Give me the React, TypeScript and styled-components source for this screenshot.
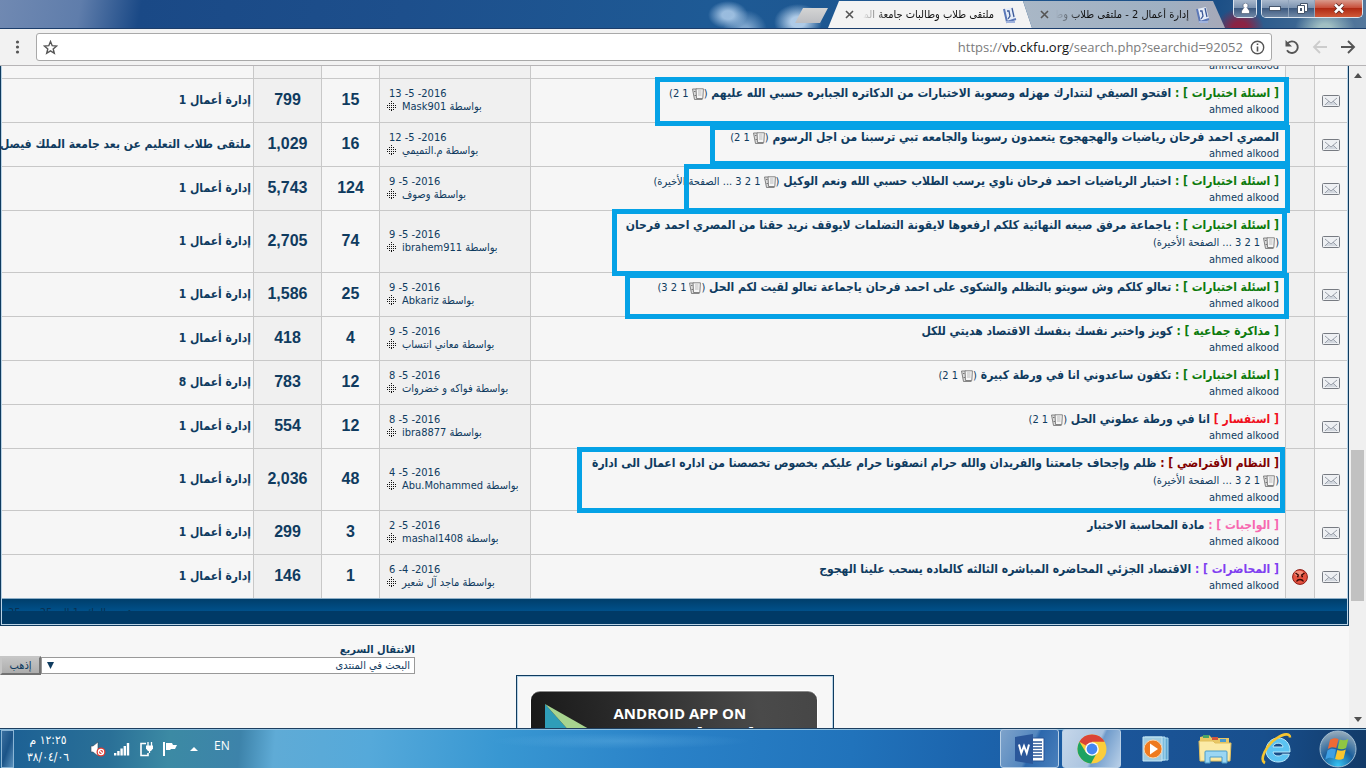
import React from "react";
import styled, { createGlobalStyle } from "styled-components";

const ui = '"DejaVu Sans Condensed", "DejaVu Sans", sans-serif';
const navy = "#0f3b5f";
const line = "#c8c8c8";

const GlobalStyle = createGlobalStyle`
  * { box-sizing: border-box; }
  html, body { margin: 0; height: 100%; overflow: hidden; background: #f7f7f7; }
  a { color: inherit; text-decoration: none; }
  button { font: inherit; color: inherit; padding: 0; border: 0; background: none; }
  svg { display: block; flex: none; }
`;

const Screen = styled.div`
  display: flex;
  flex-direction: column;
  height: 100vh;
  font-family: ${ui};
  font-size: 11px;
  color: ${navy};
`;

/* ---------- browser frame ---------- */

const TitleBar = styled.header`
  display: flex;
  justify-content: flex-end;
  align-items: flex-end;
  flex: none;
  height: 29px;
  padding-right: 3px;
  border-bottom: 1px solid #1b3d6b;
  background:
    radial-gradient(ellipse 20px 14px at 728px 15px, rgba(175, 205, 235, 0.85) 30%, transparent),
    radial-gradient(ellipse 22px 20px at 745px 30px, rgba(150, 185, 220, 0.8) 20%, transparent),
    radial-gradient(ellipse 24px 18px at 798px 22px, rgba(190, 215, 240, 0.9) 30%, transparent),
    radial-gradient(ellipse 24px 20px at 1240px 28px, rgba(150, 30, 60, 0.9) 30%, transparent),
    radial-gradient(ellipse 30px 20px at 1325px 28px, rgba(170, 200, 200, 0.9) 20%, transparent),
    linear-gradient(100deg, #7089b2 0, #5f7dab 80px, #1a4986 140px, #1d4f8c 400px, #1e5a95 700px, #1c4f86 1200px, #55789c 100%);
`;

const NewTab = styled.button`
  width: 33px;
  height: 15px;
  margin-bottom: 5px;
  background: linear-gradient(#d4d4d4, #bcbec2);
  clip-path: polygon(8px 0, 100% 0, calc(100% - 8px) 100%, 0 100%);
`;

const Tab = styled.div<{ $active?: boolean }>`
  display: flex;
  align-items: center;
  justify-content: flex-end;
  gap: ${(p) => (p.$active ? 9 : 7)}px;
  width: ${(p) => (p.$active ? 204 : 202)}px;
  height: 27px;
  padding: 0 15px 0 17px;
  margin-left: ${(p) => (p.$active ? 0 : -9)}px;
  color: #111;
  background: ${(p) => (p.$active ? "#f3f3f3" : "linear-gradient(90deg, #a9b7c6, #9fb0c2 70%, #a7a9b8)")};
  clip-path: ${(p) =>
    p.$active
      ? "polygon(11px 0, calc(100% - 9px) 0, 100% 100%, 0 100%)"
      : "polygon(0 0, calc(100% - 12px) 0, 100% 100%, 9px 100%)"};
`;

const TabTitle = styled.span`
  flex: 1;
  min-width: 0;
  direction: rtl;
  white-space: nowrap;
  overflow: hidden;
  mask-image: linear-gradient(90deg, transparent, #000 24px);
`;

const Controls = styled.div`
  display: flex;
  align-self: flex-start;
  gap: 4px;
  margin-left: 8px;
`;

const ControlGroup = styled.div`
  display: flex;
  border: 1px solid #dbe4ee;
  border-top: 0;
  border-radius: 0 0 5px 5px;
  overflow: hidden;
`;

const Control = styled.button<{ $wide?: boolean; $narrow?: boolean }>`
  display: flex;
  align-items: center;
  justify-content: center;
  width: ${(p) => (p.$wide ? 48 : p.$narrow ? 22 : 26)}px;
  height: 17px;
  border-left: 1px solid #8fa3bb;
  background: ${(p) =>
    p.$wide
      ? "linear-gradient(#d99a8c, #c8503c 45%, #b02a14 50%, #cf5a3a)"
      : "linear-gradient(#a9b9cd, #7c93b0 45%, #3d5a80 50%, #7088a6)"};
  &:first-child { border-left: 0; }
`;

const Toolbar = styled.div`
  display: flex;
  align-items: center;
  flex: none;
  height: 37px;
  padding: 0 10px 0 9px;
  border-bottom: 1px solid #b6b4b6;
  background: #f2f2f2;
`;

const Address = styled.div`
  display: flex;
  align-items: center;
  flex: 1;
  gap: 7px;
  height: 28px;
  margin-left: 10px;
  padding: 0 6px;
  border: 1px solid #a9a9a9;
  border-radius: 3px;
  background: #fff;
`;

const Url = styled.a`
  flex: 1;
  text-align: right;
  font: 13px "Open Sans", sans-serif;
  color: #7b7b7b;
  b { font-weight: 400; color: #111; }
`;

const NavButton = styled.button`
  margin-left: 12px;
  &:first-of-type { margin-left: 0; }
`;

/* ---------- page ---------- */

const Viewport = styled.div`
  display: flex;
  flex: 1;
  min-height: 0;
  overflow: hidden;
  background: #f7f7f7;
`;

const Page = styled.main`
  flex: 1;
  min-width: 0;
  margin-top: -33px;
`;

const Scrollbar = styled.div`
  display: flex;
  flex-direction: column;
  align-items: center;
  justify-content: space-between;
  width: 17px;
  padding: 7px 0 6px;
  background: #f0f0f0;
`;

const Thumb = styled.div`
  width: 13px;
  height: 151px;
  margin-top: 256px;
  background: #c1c1c1;
`;

const Frame = styled.section`
  border: 1px solid ${navy};
  padding: 0 1px 1px;
  background: #b9d3e6;
`;

const Table = styled.table`
  width: 100%;
  table-layout: fixed;
  border-collapse: separate;
  border-spacing: 0;
  direction: rtl;
`;

const Col = styled.col<{ $w?: number }>`
  width: ${(p) => (p.$w ? `${p.$w}px` : "auto")};
`;

const Cell = styled.td<{ $alt?: boolean }>`
  height: 44px;
  padding: 0;
  border-top: 1px solid ${line};
  border-left: 1px solid ${line};
  background: ${(p) => (p.$alt ? "#f0f0f0" : "#f6f6f6")};
  vertical-align: middle;
  &:last-child { border-left: 0; }
  > svg { margin: 0 auto; }
`;

const SubjectCell = styled(Cell)`
  position: relative;
  padding: 5px 6px;
  vertical-align: bottom;
  white-space: nowrap;
`;

const Count = styled(Cell)`
  padding-bottom: 2px;
  text-align: center;
  font: bold 16px "Liberation Sans", Arial, sans-serif;
`;

const ForumCell = styled(Cell)`
  padding: 0 2px 2px;
  font: bold 12px/18px ${ui};
  text-align: right;
  white-space: nowrap;
`;

const LastCell = styled(Cell)`
  padding: 0 7px 2px;
  line-height: 13px;
`;

const DateLine = styled.div`
  direction: ltr;
  padding-left: 2px;
`;

const ByLine = styled.div`
  display: flex;
  justify-content: flex-end;
  align-items: center;
  gap: 6px;
  white-space: nowrap;
`;

const Subject = styled.div`
  font: bold 12px/18px ${ui};
`;

const Prefix = styled.span<{ $color: string }>`
  color: ${(p) => p.$color};
`;

const Pages = styled.span<{ $below?: boolean }>`
  display: ${(p) => (p.$below ? "block" : "inline")};
  font: 11px ${ui};
  line-height: ${(p) => (p.$below ? 18 : 12)}px;
  svg { display: inline-block; vertical-align: -3px; margin-left: 3px; }
`;

const Author = styled.div`
  line-height: 15px;
`;

const Highlight = styled.span<{ $top: number; $right: number; $w: number; $h: number }>`
  position: absolute;
  z-index: 1;
  top: ${(p) => p.$top}px;
  right: ${(p) => p.$right}px;
  width: ${(p) => p.$w}px;
  height: ${(p) => p.$h}px;
  border: 5px solid #05a2e6;
  pointer-events: none;
`;

const TableFoot = styled.div`
  height: 26px;
  padding-left: 6px;
  border-top: 1px solid #8fb0c8;
  background: linear-gradient(#003e6b, #00508a 12px, #003a66 12px);
`;

const FootNote = styled.div`
  height: 12px;
  padding-top: 7px;
  overflow: hidden;
  line-height: 13px;
  color: #0a3050;
`;

const Jump = styled.form`
  width: 415px;
  margin-top: 17px;
`;

const JumpLabel = styled.label`
  display: block;
  direction: rtl;
  font-weight: bold;
  line-height: 13px;
`;

const JumpRow = styled.div`
  display: flex;
  align-items: center;
  height: 19px;
`;

const Go = styled.button`
  width: 41px;
  height: 19px;
  border: 2px outset #c6c6c6;
  background: linear-gradient(#c4c4c4, #adadad);
`;

const SelectBox = styled.div`
  position: relative;
  flex: 1;
  svg { position: absolute; left: 6px; top: 5px; }
`;

const Select = styled.select`
  display: block;
  width: 100%;
  height: 17px;
  padding: 0 4px;
  border: 1px solid #999;
  border-radius: 0;
  appearance: none;
  direction: rtl;
  background: #fff;
  color: ${navy};
  font: 11px ${ui};
`;

const AppBox = styled.a`
  display: block;
  width: 318px;
  height: 140px;
  margin: 0 auto;
  padding: 15px 14px;
  border: 1px solid ${navy};
  box-shadow: inset 0 0 0 1px #b9d3e6;
`;

const Badge = styled.span`
  display: flex;
  gap: 20px;
  height: 100px;
  width: 286px;
  padding: 11px 13px;
  border-radius: 9px;
  border-top: 1px solid #8a8a8a;
  box-shadow: 0 0 0 1px #fff;
  background: linear-gradient(80deg, #171717, #2b2b2b 35%, #4a4a4a 80%, #464646);
`;

const BadgeText = styled.span`
  display: block;
  color: #fff;
  font: bold 15px/20px "Open Sans", sans-serif;
  white-space: nowrap;
`;

const BadgeBrand = styled.span`
  display: block;
  padding-left: 6px;
  font: 500 32px/32px Roboto, sans-serif;
`;

/* ---------- taskbar ---------- */

const Taskbar = styled.footer`
  display: flex;
  align-items: center;
  flex: none;
  height: 40px;
  border-top: 1px solid #1d3f60;
  box-shadow: inset 0 1px 0 #8fc0e0;
  background:
    radial-gradient(ellipse 130px 8px at 620px 12px, rgba(130, 200, 240, 0.25), transparent),
    linear-gradient(95deg, #1b5f94 0, #2a7097 110px, #3c8aa4 170px, #3d83aa 240px, #5fabd6 275px, #55a9da 370px, #3897d2 500px, #2a82c8 660px, #2173bb 850px, #1c65ae 960px, #1b5599 1120px, #184f8d 1260px, #123a68 100%);
`;

const ShowDesktop = styled.button`
  width: 13px;
  height: 38px;
  margin-left: 1px;
  border: 1px solid #8cb6d6;
  background: linear-gradient(110deg, #3a6f9f, #1b5488 50%, #5c93be);
`;

const Clock = styled.time`
  width: 68px;
  direction: rtl;
  text-align: center;
  color: #fff;
  font: 12px/17px ${ui};
`;

const Tray = styled.div`
  display: flex;
  align-items: center;
  gap: 8px;
  margin-left: 8px;
`;

const Language = styled.button`
  margin: 0 0 6px 12px;
  color: #fff;
  font: 12px "Open Sans", sans-serif;
`;

const Apps = styled.nav`
  display: flex;
  align-items: center;
  margin-left: auto;
`;

const AppButton = styled.button<{ $frame?: "open" | "active"; $w: number }>`
  display: flex;
  align-items: center;
  justify-content: center;
  width: ${(p) => p.$w}px;
  height: 39px;
  margin-right: ${(p) => (p.$frame ? 3 : 0)}px;
  border: 1px solid ${(p) => (p.$frame ? "#b7cfe6" : "transparent")};
  border-radius: 3px;
  background: ${(p) =>
    p.$frame === "active"
      ? "linear-gradient(115deg, #c6d7ea, #a9c3df 55%, #6f9bcb 60%, #b9d0e8)"
      : p.$frame === "open"
        ? "linear-gradient(115deg, #7ea3cb, #5386be 50%, #2c68ad 55%, #4a80bc)"
        : "none"};
`;

/* ---------- drawings ---------- */

const Favicon = () => (
  <svg width="14" height="18" viewBox="0 0 14 18">
    <path d="M1 3l9-2 3 12-9 3z" fill="#e6edf8" />
    <path d="M1 3l3 13 9-3" fill="none" stroke="#5b78b8" strokeWidth="2" />
    <path d="M4 5h2l1 5-2 3M9 2l2 9" fill="none" stroke="#3d5a98" strokeWidth="1.3" />
    <path d="M3 16h9" stroke="#9fb2dc" strokeWidth="2" />
  </svg>
);

const Cross = () => (
  <svg width="9" height="9" viewBox="0 0 9 9">
    <path d="M1 1l7 7M8 1l-7 7" stroke="#555" strokeWidth="1.6" />
  </svg>
);

const Envelope = () => (
  <svg width="18" height="12" viewBox="0 0 18 12">
    <rect x=".5" y=".5" width="17" height="11" rx="1" fill="#eef0f3" stroke="#777b82" />
    <path d="M2 10l5-4 2 2 2-2 5 4z" fill="#d3d8df" />
    <path d="M3 3l6 5 6-5M3 10l4-4M15 10l-4-4" fill="none" stroke="#9ba1ab" />
  </svg>
);

const Angry = () => (
  <svg width="16" height="16" viewBox="0 0 16 16">
    <circle cx="8" cy="8" r="7.4" fill="#e4523f" stroke="#8b1a14" />
    <ellipse cx="7" cy="4.5" rx="4.5" ry="2.8" fill="#f58d78" />
    <path d="M3.500 4l3.500 2.500M12.500 4L9 6.500" stroke="#3a0806" strokeWidth="1.4" />
    <path d="M5 7.4h1.6M9.4 7.4H11" stroke="#3a0806" strokeWidth="1.6" />
    <path d="M4.5 12.500c1.500-2.600 5.500-2.600 7 0" fill="none" stroke="#3a0806" strokeWidth="1.4" />
  </svg>
);

const dots = [
  [4, 0], [2, 2], [4, 2], [6, 2], [0, 4], [2, 4], [4, 4], [6, 4], [8, 4],
  [0, 6], [2, 6], [4, 6], [6, 6], [8, 6], [2, 8], [4, 8], [6, 8], [4, 9],
];
const GoLast = () => (
  <svg width="9" height="10" viewBox="0 0 9 10" shapeRendering="crispEdges">
    {dots.map(([x, y]) => (
      <rect key={`${x}-${y}`} x={x} y={y} width="1" height="1" fill="#111" />
    ))}
  </svg>
);

const PagesIcon = () => (
  <svg width="12" height="12" viewBox="0 0 12 12">
    <path d="M.5 1h4l1 10.500H2.500z" fill="#dcdcdc" stroke="#777" strokeWidth=".9" />
    <path d="M4 .8h7.400l-.6 9.700H4.500z" fill="#f6f6f6" stroke="#777" strokeWidth=".9" />
    <path d="M6 3h3.500M6 5h3.500M6 7h3.500" stroke="#bbb" />
    <path d="M2 3.500h1.500M2.500 7.500H4" stroke="#777" />
    <path d="M3 11.500h7.500" stroke="#888" />
  </svg>
);

const PlayMark = () => (
  <svg width="50" height="60" viewBox="0 0 50 60">
    <path d="M1 1v58l26-29z" fill="#2f9db8" />
    <path d="M1 1l26 29 18-4z" fill="#a7d48f" />
    <path d="M43 25l6 5-22 20V30z" fill="#e2574a" />
  </svg>
);

const WordIcon = () => (
  <svg width="30" height="30" viewBox="0 0 30 30">
    <path d="M16 4h13v23H16z" fill="#fff" stroke="#2b5797" />
    <path d="M18 8h9M18 11h9M18 14h9M18 17h9M18 20h9M18 23h9" stroke="#2b5797" strokeWidth="1.400" />
    <path d="M0 3l18-3v30L0 27z" fill="#2b579a" />
    <path d="M4 10.500l2.300 8.500L9 12l2.700 7L14 10.500" fill="none" stroke="#fff" strokeWidth="2" />
  </svg>
);

const ChromeIcon = () => (
  <svg width="30" height="30" viewBox="0 0 30 30">
    <circle cx="15" cy="15" r="14.500" fill="#fbcd3b" />
    <path d="M15 15L2.400 7.800A14.500 14.500 0 0 1 27.600 7.800H15z" fill="#db4437" />
    <path d="M2.400 7.800A14.500 14.500 0 0 0 14 29.500l6-11L15 15 9 18.500z" fill="#1da362" />
    <circle cx="15" cy="15" r="6.800" fill="#fff" />
    <circle cx="15" cy="15" r="5.400" fill="#4587f3" />
  </svg>
);

const MediaIcon = () => (
  <svg width="27" height="26" viewBox="0 0 27 26">
    <path d="M6 2h20v22H6z" fill="#5fa9d3" stroke="#a8d6ee" />
    <path d="M3 1h20v23H3z" fill="#7cbbdd" stroke="#b5dff3" />
    <path d="M1 1h19v24H1z" fill="#9fcbe0" stroke="#c6e7f5" />
    <circle cx="11" cy="13" r="9" fill="#ee7a1f" stroke="#fbd3a8" />
    <path d="M8 7.500v11l8-5.500z" fill="#fff" />
  </svg>
);

const FolderIcon = () => (
  <svg width="34" height="30" viewBox="0 0 34 30">
    <path d="M2 3l9-2 3 3h17v23H2z" fill="#e8c765" />
    <path d="M5 1h6v3H5z" fill="#4aa564" />
    <path d="M14 3h6v3h-6z" fill="#d0553b" />
    <path d="M22 5h6v3h-6z" fill="#4c9bd0" />
    <path d="M1 7h14l2 2h16l-1 18H2z" fill="#fbeaa6" stroke="#e2bf5c" />
    <path d="M7 29V18q0-1 1-1h20q1 0 1 1v11h-5v-6H12v6z" fill="#9bd6f3" stroke="#4b9cc9" />
  </svg>
);

const ExplorerIcon = () => (
  <svg width="32" height="32" viewBox="0 0 32 32">
    <path d="M29 19H12c.4 2.800 2.500 4 5 4 2 0 3.500-.6 4.500-1.800h6.800C26.800 26.500 22.500 29 17 29 10 29 5 24 5 17.500S10 5 17 5s12.500 5 12 14zM12 14h10c-.3-2.600-2.300-3.800-4.900-3.800S12.600 11.500 12 14z" fill="#5cc3f2" stroke="#b9e8fb" />
    <path d="M4 30C-2 27 5 12 16 5c7-4.500 13-5 13-.5" fill="none" stroke="#f4c531" strokeWidth="2.600" />
  </svg>
);

const StartOrb = () => (
  <svg width="38" height="38" viewBox="0 0 38 38">
    <defs>
      <radialGradient id="orb" cx=".5" cy=".95" r=".9">
        <stop offset="0" stopColor="#35c3f3" />
        <stop offset=".5" stopColor="#1c5f9c" />
        <stop offset="1" stopColor="#8fa6b8" />
      </radialGradient>
    </defs>
    <circle cx="19" cy="19" r="18" fill="url(#orb)" stroke="#a3bfd4" />
    <path d="M11 10c3-2 5.500-2 8.500-1l-2.200 9c-3-1-5.500-1-8.500 1z" fill="#ee6a35" />
    <path d="M20.800 9.500c3 1.200 5.500 1 8.500-.5l-2.200 9c-3 1.500-5.500 1.500-8.500.5z" fill="#8fc643" />
    <path d="M8.500 20.500c3-2 5.500-2 8.500-1l-2.200 9c-3-1-5.500-1-8.500 1z" fill="#3fa0e4" />
    <path d="M18.300 20c3 1.200 5.500 1 8.500-.5l-2.200 9c-3 1.500-5.500 1.500-8.500.5z" fill="#fbc62e" />
  </svg>
);

/* ---------- data ---------- */

type Topic = {
  prefix?: string;
  color?: string;
  colon?: boolean;
  title: string;
  pages?: number;
  last?: boolean;
  below?: boolean;
  date: string;
  by: string;
  replies: string;
  views: string;
  forum: string;
  mood?: boolean;
  box?: [number, number, number, number];
};

const exams = { prefix: "اسئلة اختبارات", color: "#0b7a0b", colon: true };
const business = "إدارة أعمال 1";

const topics: Topic[] = [
  { ...exams, title: "افتحو الصيفي لنتدارك مهزله وصعوبة الاختبارات من الدكاتره الجبابره حسبي الله عليهم", pages: 2, date: "13 -5 -2016", by: "Mask901", replies: "15", views: "799", forum: business, box: [-2, -4, 634, 49] },
  { title: "المصري احمد فرحان رياضيات والهجهجوج يتعمدون رسوبنا والجامعه تبي ترسبنا من اجل الرسوم", pages: 2, date: "12 -5 -2016", by: "م.التميمي", replies: "16", views: "1,029", forum: "ملتقى طلاب التعليم عن بعد جامعة الملك فيصل", box: [2, -5, 580, 41] },
  { ...exams, title: "اختبار الرياضيات احمد فرحان ناوي يرسب الطلاب حسبي الله ونعم الوكيل", pages: 3, last: true, date: "9 -5 -2016", by: "وصوف", replies: "124", views: "5,743", forum: business, box: [-3, -5, 606, 49] },
  { ...exams, title: "ياجماعة مرفق صيغه النهائية كلكم ارفعوها لايقونة التضلمات لايوقف نريد حقنا من المصري احمد فرحان", pages: 3, last: true, below: true, date: "9 -5 -2016", by: "ibrahem911", replies: "74", views: "2,705", forum: business, box: [-2, -2, 675, 67] },
  { ...exams, title: "تعالو كلكم وش سويتو بالتظلم والشكوى على احمد فرحان ياجماعة تعالو لقيت لكم الحل", pages: 3, date: "9 -5 -2016", by: "Abkariz", replies: "25", views: "1,586", forum: business, box: [0, -4, 664, 46] },
  { ...exams, prefix: "مذاكرة جماعية", title: "كويز واختبر نفسك بنفسك الاقتصاد هديتي للكل", date: "9 -5 -2016", by: "معاني انتساب", replies: "4", views: "418", forum: business },
  { ...exams, title: "تكفون ساعدوني انا في ورطة كبيرة", pages: 2, date: "8 -5 -2016", by: "فواكه و خضروات", replies: "12", views: "783", forum: "إدارة أعمال 8" },
  { prefix: "استفسار", color: "#f01020", title: "انا في ورطة عطوني الحل", pages: 2, date: "8 -5 -2016", by: "ibra8877", replies: "12", views: "554", forum: business },
  { prefix: "النظام الأفتراضي", color: "#800000", colon: true, title: "ظلم وإجحاف جامعتنا والفريدان والله حرام انصفونا حرام عليكم بخصوص تخصصنا من اداره اعمال الى ادارة", pages: 3, last: true, below: true, date: "4 -5 -2016", by: "Abu.Mohammed", replies: "48", views: "2,036", forum: business, box: [-2, 0, 708, 66] },
  { prefix: "الواجبات", color: "#f768b0", colon: true, title: "مادة المحاسبة الاختبار", date: "2 -5 -2016", by: "mashal1408", replies: "3", views: "299", forum: business },
  { prefix: "المحاضرات", color: "#8040f0", colon: true, title: "الاقتصاد الجزئي المحاضره المباشره الثالثه كالعاده يسحب علينا الهجوج", date: "6 -4 -2016", by: "ماجد آل شعير", replies: "1", views: "146", forum: business, mood: true },
];

const PageLinks = ({ topic }: { topic: Topic }) => (
  <Pages $below={topic.below}>
    (<PagesIcon />
    {Array.from({ length: topic.pages ?? 0 }, (_, i) => (
      <React.Fragment key={i}>
        {i > 0 && " "}
        <a href="#page">{i + 1}</a>
      </React.Fragment>
    ))}
    {topic.last && (
      <>
        {" ... "}
        <a href="#last">الصفحة الأخيرة</a>
      </>
    )}
    )
  </Pages>
);

const TopicRow = ({ topic }: { topic: Topic }) => (
  <tr>
    <Cell><Envelope /></Cell>
    <Cell $alt>{topic.mood && <Angry />}</Cell>
    <SubjectCell>
      <Subject>
        {topic.prefix && (
          <Prefix $color={topic.color ?? navy}>[ {topic.prefix} ]{topic.colon && " :"} </Prefix>
        )}
        <a href="#topic">{topic.title}</a>{" "}
        {topic.pages && <PageLinks topic={topic} />}
      </Subject>
      <Author>ahmed alkood</Author>
      {topic.box && <Highlight $top={topic.box[0]} $right={topic.box[1]} $w={topic.box[2]} $h={topic.box[3]} />}
    </SubjectCell>
    <LastCell $alt>
      <DateLine>{topic.date}</DateLine>
      <ByLine>
        <span>بواسطة <a href="#member">{topic.by}</a></span>
        <GoLast />
      </ByLine>
    </LastCell>
    <Count>{topic.replies}</Count>
    <Count $alt>{topic.views}</Count>
    <ForumCell><a href="#forum">{topic.forum}</a></ForumCell>
  </tr>
);

export default function App() {
  return (
    <Screen>
      <GlobalStyle />
      <TitleBar>
        <NewTab aria-label="New tab" />
        <Tab $active>
          <Cross />
          <TabTitle>ملتقى طلاب وطالبات جامعة الملك</TabTitle>
          <Favicon />
        </Tab>
        <Tab>
          <Cross />
          <TabTitle>إدارة أعمال 2 - ملتقى طلاب وطا</TabTitle>
          <Favicon />
        </Tab>
        <Controls>
          <ControlGroup>
            <Control $narrow aria-label="Profile">
              <svg width="9" height="11" viewBox="0 0 9 11"><path d="M4.500 0a2.500 2.500 0 0 1 1.500 4.500L8.500 8v2.500h-8V8L3 4.500A2.500 2.500 0 0 1 4.500 0z" fill="#fff" stroke="#46566c" strokeWidth=".6" /></svg>
            </Control>
          </ControlGroup>
          <ControlGroup>
            <Control aria-label="Minimize">
              <svg width="12" height="5" viewBox="0 0 12 5"><rect x=".5" y=".5" width="11" height="4" fill="#fff" stroke="#46566c" /></svg>
            </Control>
            <Control aria-label="Restore">
              <svg width="12" height="12" viewBox="0 0 12 12"><path d="M4.500.5h7v8h-7z" fill="#fff" stroke="#46566c" /><path d="M1.500 2.500h7v8h-7z" fill="#fff" stroke="#46566c" /><path d="M4 5h2v3H4z" fill="#46566c" /></svg>
            </Control>
            <Control $wide aria-label="Close">
              <svg width="12" height="11" viewBox="0 0 12 11"><path d="M2 1.500l8 8M10 1.500l-8 8" stroke="#5a2420" strokeWidth="4" /><path d="M2 1.500l8 8M10 1.500l-8 8" stroke="#fff" strokeWidth="2.500" /></svg>
            </Control>
          </ControlGroup>
        </Controls>
      </TitleBar>

      <Toolbar>
        <NavButton aria-label="Menu">
          <svg width="17" height="16" viewBox="0 0 17 16"><g fill="#555"><circle cx="8.500" cy="3" r="1.600" /><circle cx="8.500" cy="8" r="1.600" /><circle cx="8.500" cy="13" r="1.600" /></g></svg>
        </NavButton>
        <Address>
          <svg width="15" height="15" viewBox="0 0 15 15"><path d="M7.500 1.500l1.700 4.200 4.500.3-3.500 2.900 1.100 4.400-3.800-2.400-3.800 2.400 1.100-4.400L1.300 6l4.500-.3z" fill="none" stroke="#555" strokeWidth="1.400" /></svg>
          <Url href="#address">https://<b>vb.ckfu.org</b>/search.php?searchid=92052</Url>
          <svg width="15" height="15" viewBox="0 0 15 15"><circle cx="7.500" cy="7.500" r="6.200" fill="none" stroke="#555" strokeWidth="1.400" /><path d="M7.500 6.500v5M7.500 3.500v1.600" stroke="#555" strokeWidth="1.600" /></svg>
        </Address>
        <NavButton aria-label="Reload">
          <svg width="16" height="16" viewBox="0 0 16 16"><path d="M3.500 4.500A5.800 5.800 0 1 1 3 11.200" fill="none" stroke="#555" strokeWidth="1.900" /><path d="M1.500 1v6.500H8z" fill="#555" /></svg>
        </NavButton>
        <NavButton aria-label="Forward">
          <svg width="16" height="16" viewBox="0 0 16 16"><path d="M15 8H2M8 2L2 8l6 6" fill="none" stroke="#ccc" strokeWidth="1.800" /></svg>
        </NavButton>
        <NavButton aria-label="Back">
          <svg width="16" height="16" viewBox="0 0 16 16"><path d="M1 8h13M8 2l6 6-6 6" fill="none" stroke="#555" strokeWidth="1.900" /></svg>
        </NavButton>
      </Toolbar>

      <Viewport>
        <Page>
          <Frame>
            <Table>
              <colgroup>
                <Col $w={33} />
                <Col $w={29} />
                <Col />
                <Col $w={151} />
                <Col $w={58} />
                <Col $w={68} />
                <Col $w={251} />
              </colgroup>
              <tbody>
                <tr>
                  <Cell />
                  <Cell $alt />
                  <SubjectCell><Author>ahmed alkood</Author></SubjectCell>
                  <Cell $alt />
                  <Cell />
                  <Cell $alt />
                  <Cell />
                </tr>
                {topics.map((topic) => <TopicRow key={topic.title} topic={topic} />)}
              </tbody>
            </Table>
            <TableFoot>
              <FootNote>عرض النتائج 1 إلى 25 من 25</FootNote>
            </TableFoot>
          </Frame>
          <Jump>
            <JumpLabel htmlFor="jump">الانتقال السريع</JumpLabel>
            <JumpRow>
              <Go type="button">إذهب</Go>
              <SelectBox>
                <Select id="jump"><option>البحث في المنتدى</option></Select>
                <svg width="7" height="7" viewBox="0 0 7 7"><path d="M0 0h7L3.500 7z" fill={navy} /></svg>
              </SelectBox>
            </JumpRow>
          </Jump>
          <AppBox href="#android">
            <Badge>
              <PlayMark />
              <BadgeText>
                ANDROID APP ON
                <BadgeBrand>Google play</BadgeBrand>
              </BadgeText>
            </Badge>
          </AppBox>
        </Page>
        <Scrollbar>
          <svg width="8" height="5" viewBox="0 0 8 5"><path d="M0 5l4-5 4 5z" fill="#505050" /></svg>
          <Thumb />
          <svg width="8" height="5" viewBox="0 0 8 5"><path d="M0 0h8L4 5z" fill="#505050" /></svg>
        </Scrollbar>
      </Viewport>

      <Taskbar>
        <ShowDesktop aria-label="Show desktop" />
        <Clock>١٢:٢٥ م<br />٣٨/٠٤/٠٦</Clock>
        <Tray>
          <svg width="16" height="16" viewBox="0 0 16 16"><path d="M1 5h2l5-4v14l-5-4H1z" fill="#fff" stroke="#345" strokeWidth=".6" /><circle cx="11" cy="11" r="4.500" fill="#e03a32" /><circle cx="11" cy="11" r="2.600" fill="none" stroke="#fff" strokeWidth="1.200" /><path d="M9 9l4 4" stroke="#fff" strokeWidth="1.200" /></svg>
          <svg width="16" height="14" viewBox="0 0 16 14"><path d="M0 11h2.400v2.500H0zM3.200 9h2.400v4.500H3.200zM6.400 6.500h2.400v7H6.400zM9.600 4H12v9.500H9.600zM12.800 1h2.400v12.500h-2.400z" fill="#fff" /></svg>
          <svg width="16" height="16" viewBox="0 0 16 16"><path d="M8 2.500H3v12h7V12" fill="none" stroke="#fff" strokeWidth="1.600" /><path d="M8 4.500h7v3l-2 2.500h-3L8 7.500z" fill="#fff" /><path d="M10 1v4M13.500 1v4M11.500 9v3" stroke="#fff" strokeWidth="1.300" /></svg>
          <svg width="16" height="16" viewBox="0 0 16 16"><path d="M2 1v14" stroke="#fff" strokeWidth="2" /><path d="M4 2h6l1 2h4l-2 4H9L8 9H4z" fill="#fff" /></svg>
          <svg width="16" height="8" viewBox="0 0 16 8"><path d="M4 6l4-4 4 4z" fill="#fff" /></svg>
        </Tray>
        <Language>EN</Language>
        <Apps>
          <AppButton $w={59} $frame="open" aria-label="Word"><WordIcon /></AppButton>
          <AppButton $w={59} $frame="active" aria-label="Chrome"><ChromeIcon /></AppButton>
          <AppButton $w={62} aria-label="Media Player"><MediaIcon /></AppButton>
          <AppButton $w={58} aria-label="Explorer"><FolderIcon /></AppButton>
          <AppButton $w={66} aria-label="Internet Explorer"><ExplorerIcon /></AppButton>
          <AppButton $w={56} aria-label="Start"><StartOrb /></AppButton>
        </Apps>
      </Taskbar>
    </Screen>
  );
}
